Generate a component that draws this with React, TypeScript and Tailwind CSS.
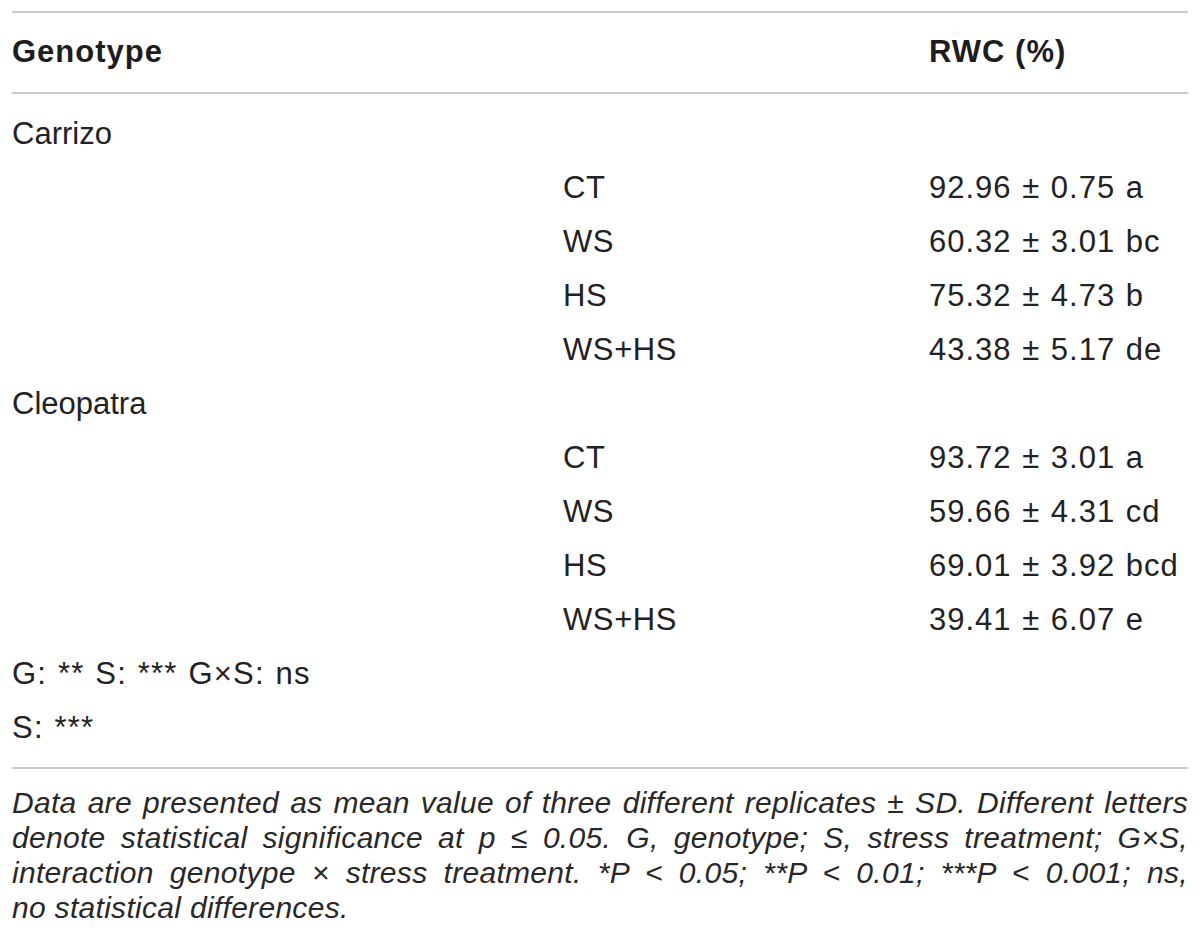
import React from "react";

type Row = { g?: string; t?: string; v?: string; note?: string };

const rows: Row[] = [
  { g: "Carrizo" },
  { t: "CT", v: "92.96 ± 0.75 a" },
  { t: "WS", v: "60.32 ± 3.01 bc" },
  { t: "HS", v: "75.32 ± 4.73 b" },
  { t: "WS+HS", v: "43.38 ± 5.17 de" },
  { g: "Cleopatra" },
  { t: "CT", v: "93.72 ± 3.01 a" },
  { t: "WS", v: "59.66 ± 4.31 cd" },
  { t: "HS", v: "69.01 ± 3.92 bcd" },
  { t: "WS+HS", v: "39.41 ± 6.07 e" },
  { note: "G: ** S: *** G×S: ns" },
  { note: "S: ***" },
];

export default function App() {
  return (
    <div className="bg-white w-[1200px] h-[952px] px-[12px] pt-[11px] font-['Liberation_Sans',Arial,sans-serif] text-[#242122]">
      <div className="h-[2px] bg-[#cacaca]" />
      <div className="grid grid-cols-[551px_366px_1fr] h-[79px] items-center text-[31px] font-bold tracking-[1px] text-[#1e1c1d]">
        <div>Genotype</div>
        <div />
        <div>RWC (%)</div>
      </div>
      <div className="h-[2px] bg-[#cacaca]" />
      <div className="pt-[13px] pb-[12px] text-[31px]">
        {rows.map((r, i) =>
          r.note ? (
            <div key={i} className="h-[54px] flex items-center tracking-[1.2px] [word-spacing:1px]">
              {r.note}
            </div>
          ) : (
            <div key={i} className="grid grid-cols-[551px_366px_1fr] h-[54px] items-center">
              <div>{r.g ?? ""}</div>
              <div className="tracking-[0.6px]">{r.t ?? ""}</div>
              <div className="tracking-[1px] [word-spacing:1px]">{r.v ?? ""}</div>
            </div>
          )
        )}
      </div>
      <div className="h-[2px] bg-[#cacaca]" />
      <div className="pt-[16px] text-[30px] italic leading-[35px] tracking-[0.3px] text-[#2a2728]">
        <div className="text-justify [text-align-last:justify]">
          Data are presented as mean value of three different replicates ± SD. Different letters
        </div>
        <div className="text-justify [text-align-last:justify]">
          denote statistical significance at p ≤ 0.05. G, genotype; S, stress treatment; G×S,
        </div>
        <div className="text-justify [text-align-last:justify]">
          interaction genotype × stress treatment. *P &lt; 0.05; **P &lt; 0.01; ***P &lt; 0.001; ns,
        </div>
        <div>no statistical differences.</div>
      </div>
    </div>
  );
}
